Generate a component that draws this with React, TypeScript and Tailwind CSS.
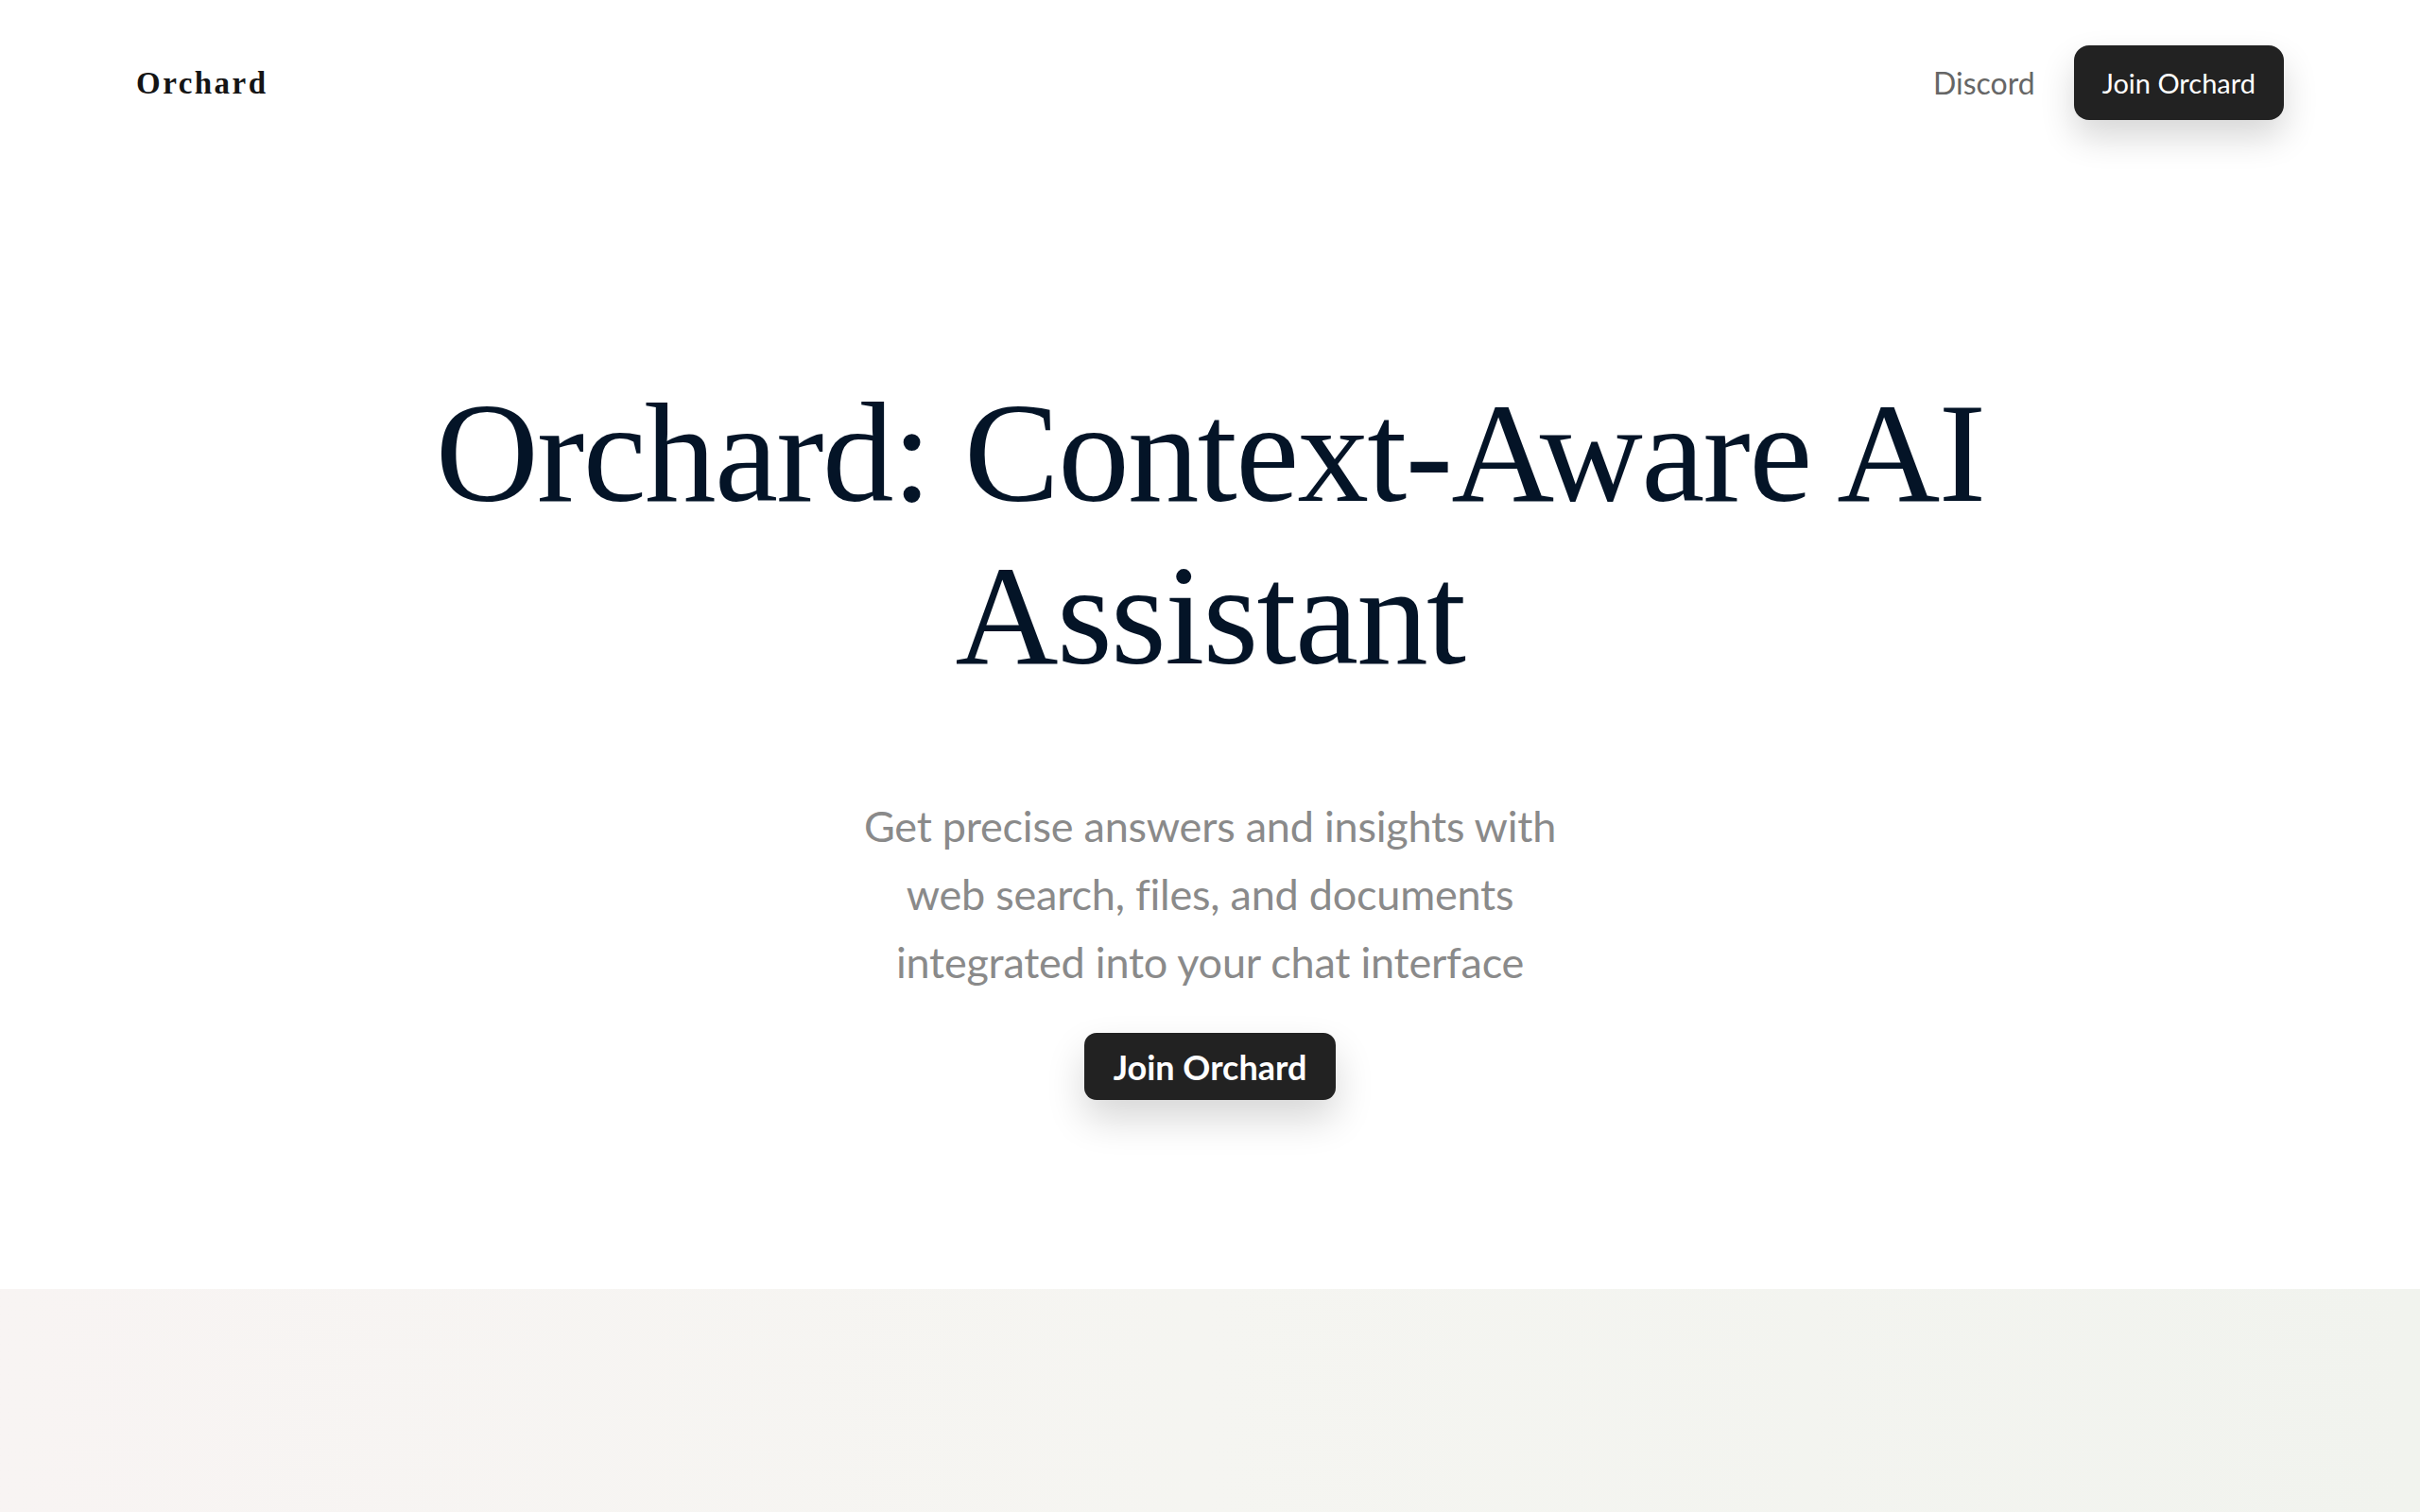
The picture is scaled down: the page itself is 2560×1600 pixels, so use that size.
import React from "react";

const serif = "font-['Liberation_Serif','Times_New_Roman',serif]";
const sans = "font-['Lato','Noto_Sans',sans-serif]";

function NavBar() {
  return (
    <header className="flex items-center justify-between px-[144px] pt-[48px]">
      <a href="#" className={`${serif} mt-[2px] text-[33px] font-bold tracking-[0.075em] text-[#141414]`}>
        Orchard
      </a>
      <nav className="flex items-center gap-[41px]">
        <a href="#" className={`${sans} text-[32px] text-[#666666]`}>
          Discord
        </a>
        <button
          className={`${sans} flex h-[79px] items-center rounded-[16px] bg-[#222222] px-[30px] text-[29px] text-white shadow-[0_18px_36px_rgba(0,0,0,0.16)]`}
        >
          Join Orchard
        </button>
      </nav>
    </header>
  );
}

function Hero() {
  return (
    <section className="flex flex-col items-center pt-[266px] pb-[200px]">
      <h1
        className={`${serif} max-w-[1760px] text-center text-[151px] leading-[172px] tracking-[-0.011em] text-[#041427]`}
      >
        Orchard: Context-Aware AI Assistant
      </h1>
      <p
        className={`${sans} mt-[101px] max-w-[820px] text-center text-[45px] leading-[72px] tracking-[-0.005em] text-[#8a8a8a]`}
      >
        Get precise answers and insights with
        <br />
        web search, files, and documents
        <br />
        integrated into your chat interface
      </p>
      <button
        className={`${sans} mt-[39px] flex h-[71px] items-center rounded-[13px] bg-[#222222] px-[31px] text-[36px] font-bold text-white shadow-[0_20px_40px_rgba(0,0,0,0.16)]`}
      >
        Join Orchard
      </button>
    </section>
  );
}

export default function App() {
  return (
    <div className="min-h-screen bg-white">
      <NavBar />
      <Hero />
      <div className="h-[600px] bg-gradient-to-r from-[#f8f4f3] via-[#f5f5f1] to-[#f1f3ee]" />
    </div>
  );
}
